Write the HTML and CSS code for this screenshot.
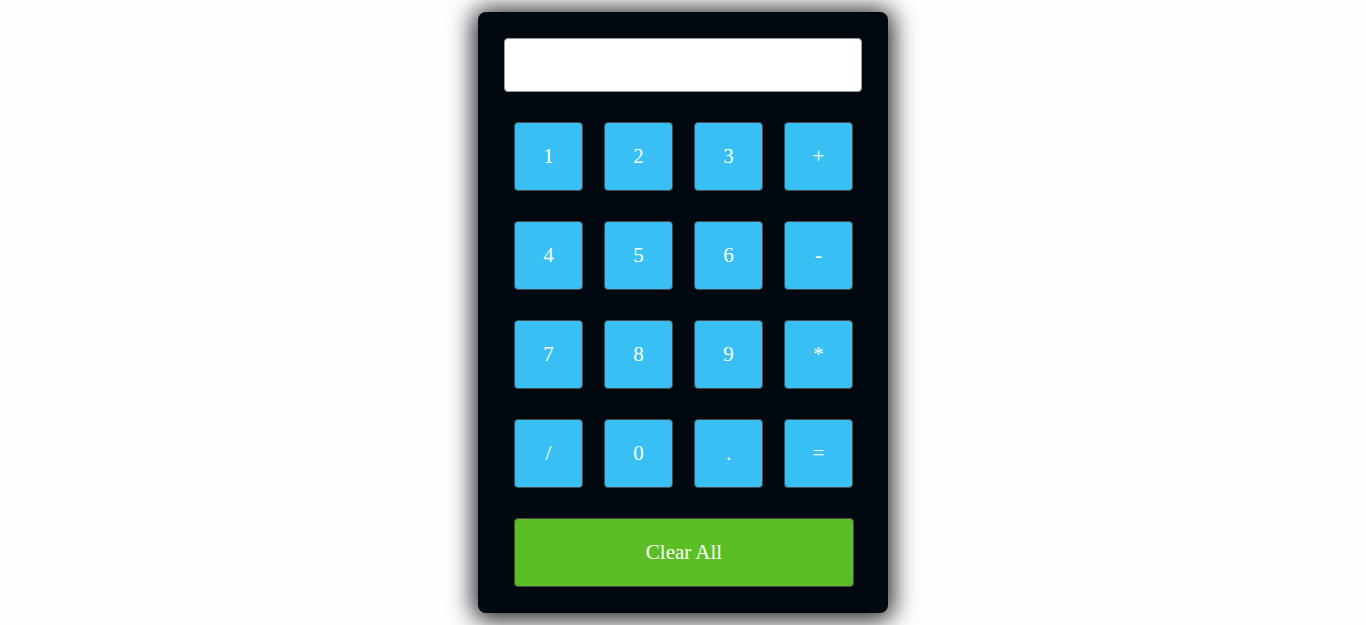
FILE: index.html
```html
<!DOCTYPE html>
<html lang="en">
<head>
  <meta charset="UTF-8">
  <title>Calculator</title>
  <link rel="stylesheet" href="styles.css">
</head>
<body>

  <div class="calculator">
    <input type="text" class="display" id="display">

    <div class="keys">
      <button class="key">1</button>
      <button class="key">2</button>
      <button class="key">3</button>
      <button class="key">+</button>
      <button class="key">4</button>
      <button class="key">5</button>
      <button class="key">6</button>
      <button class="key">-</button>
      <button class="key">7</button>
      <button class="key">8</button>
      <button class="key">9</button>
      <button class="key">*</button>
      <button class="key">/</button>
      <button class="key">0</button>
      <button class="key">.</button>
      <button class="key">=</button>
    </div>

    <button class="clear">Clear All</button>
  </div>

</body>
</html>
```

FILE: styles.css
```css
body {
  margin: 0;
  padding: 12px 0 40px;
  background: #fefefe;
  font-family: 'Liberation Serif', 'Times New Roman', serif;
}

.calculator {
  box-sizing: border-box;
  width: 410px;
  height: 601px;
  margin: 0 auto;
  padding: 26px;
  background-color: #020810;
  border-radius: 8px;
  box-shadow: 0 2px 25px 5px rgba(0, 0, 0, 0.85);
  display: flex;
  flex-direction: column;
}

.display {
  box-sizing: border-box;
  width: 358px;
  height: 54px;
  margin: 0;
  border: 1px solid #9a9a9a;
  border-radius: 4px;
  background: #fff;
}

.keys {
  display: grid;
  grid-template-columns: repeat(4, 69px);
  grid-auto-rows: 69px;
  column-gap: 21px;
  row-gap: 30px;
  margin: 30px 0 0 10px;
}

.key, .clear {
  box-sizing: border-box;
  border: 1px solid #4a4a4a;
  border-radius: 4px;
  color: #fff;
  font-family: 'Liberation Serif', 'Times New Roman', serif;
  font-size: 21px;
  cursor: pointer;
  padding: 0;
}

.key {
  background-color: #38c0f4;
}

.clear {
  width: 340px;
  height: 69px;
  margin: 30px 0 0 10px;
  background-color: #5bbf24;
}
```
